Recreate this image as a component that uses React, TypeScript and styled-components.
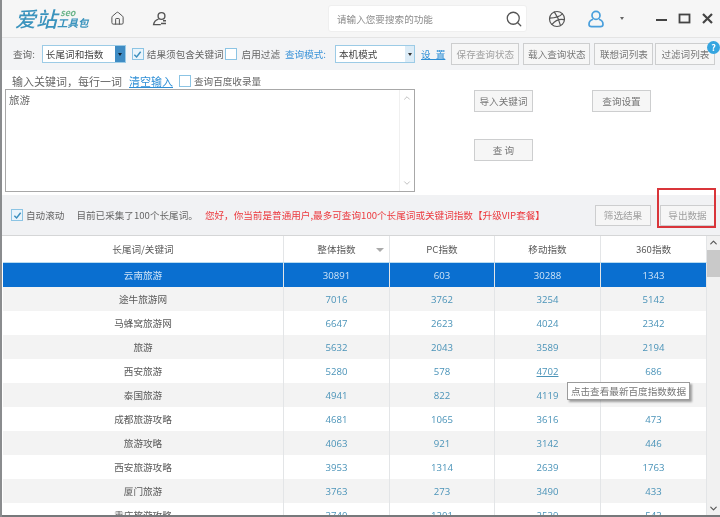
import React from "react";
import styled, { createGlobalStyle } from "styled-components";
import { ChevronDown, ChevronUp, Dribbble, House, Search } from "lucide-react";

const Global = createGlobalStyle`
  html, body { margin: 0; padding: 0; background: #f4f5f7; overflow: hidden; }
  * { box-sizing: border-box; }
`;

const FONT = `"Noto Sans CJK SC", "Liberation Sans", sans-serif`;

const Frame = styled.div`
  position: relative;
  width: 720px;
  height: 517px;
  overflow: hidden;
  display: flex;
  flex-direction: column;
  font-family: ${FONT};
  font-size: 9.6px;
  color: #666;
  background: #f4f5f7;
  border-left: 2px solid #8a8c8e;
  filter: blur(0.5px);
`;

const TitleBar = styled.div`
  height: 38px;
  display: flex;
  align-items: center;
  background: #f6f6f6;
  border-bottom: 1px solid #e4e4e4;
  padding-left: 13px;
  color: #555;
`;

const Logo = styled.div`
  width: 95px;
  display: flex;
  align-items: flex-end;
  color: #3a93bd;
  font-style: italic;
  line-height: 1;
`;

const LogoMain = styled.span`
  font-size: 21px;
  font-weight: 500;
`;

const LogoSide = styled.div`
  display: flex;
  flex-direction: column;
  align-items: flex-end;
  font-size: 10.5px;
  font-weight: 700;
  margin-bottom: 1px;
  span:first-child {
    font-size: 9px;
    color: #6bb58a;
    margin: 0 13px 1px 0;
    line-height: 8px;
  }
`;

const NavIcon = styled.div<{ $width: number }>`
  width: ${(p) => p.$width}px;
  display: flex;
  align-items: center;
`;

const SearchBox = styled.div`
  margin-left: 156px;
  width: 199px;
  height: 27px;
  background: #fff;
  border-radius: 3px;
  border: 1px solid #efefef;
  display: flex;
  align-items: center;
  justify-content: space-between;
  padding: 0 3px 0 8px;
  color: #8b8b8b;
`;

const TitleRight = styled.div`
  margin-left: 21px;
  display: flex;
  align-items: center;
`;

const Caret = styled.div`
  width: 0;
  height: 0;
  margin: 0 31px 0 15px;
  border-left: 2px solid transparent;
  border-right: 2px solid transparent;
  border-top: 3px solid #666;
`;

const WindowButtons = styled.div`
  display: flex;
  align-items: center;
  gap: 10px;
`;

const Toolbar = styled.div`
  height: 32px;
  display: flex;
  align-items: center;
  padding-left: 11px;
  background: #f3f4f6;
  white-space: nowrap;
`;

const Select = styled.div<{ $width: number }>`
  flex: none;
  width: ${(p) => p.$width}px;
  height: 18px;
  background: #fff;
  border: 1px solid #9ccbe6;
  display: flex;
  align-items: center;
  justify-content: space-between;
  padding-left: 3px;
  color: #444;
`;

const SelectArrow = styled.div<{ $dark?: boolean }>`
  width: ${(p) => (p.$dark ? 10 : 9)}px;
  height: 100%;
  background: ${(p) => (p.$dark ? "#3f8cc4" : "#dcecf7")};
  display: flex;
  align-items: center;
  justify-content: center;
  &::after {
    content: "";
    border-left: 2px solid transparent;
    border-right: 2px solid transparent;
    border-top: 3px solid ${(p) => (p.$dark ? "#123" : "#333")};
  }
`;

const Check = styled.span<{ $checked?: boolean }>`
  flex: none;
  width: 12px;
  height: 12px;
  border: 1px solid #8cc4e4;
  background: ${(p) => (p.$checked ? "#e9f4fb" : "#fff")};
  display: inline-flex;
  align-items: center;
  justify-content: center;
  svg { display: block; }
`;

const Spaced = styled.span<{ $left?: number; $color?: string }>`
  flex: none;
  margin-left: ${(p) => p.$left ?? 0}px;
  color: ${(p) => p.$color ?? "inherit"};
`;

const LinkText = styled.a<{ $left?: number }>`
  flex: none;
  margin-left: ${(p) => p.$left ?? 0}px;
  color: #2f8fd6;
  text-decoration: underline;
`;

const SettingLink = styled(LinkText)`
  word-spacing: 3px;
`;

const HeadLink = styled(LinkText)`
  font-size: 11px;
`;

const Button = styled.div<{ $width: number; $left?: number; $muted?: boolean; $height?: number }>`
  flex: none;
  width: ${(p) => p.$width}px;
  height: ${(p) => p.$height ?? 22}px;
  margin-left: ${(p) => p.$left ?? 0}px;
  border: 1px solid #cdcecf;
  background: #f6f6f6;
  color: ${(p) => (p.$muted ? "#a0a0a0" : "#777")};
  display: flex;
  align-items: center;
  justify-content: center;
  white-space: nowrap;
`;

const HelpBadge = styled.div`
  position: absolute;
  left: 705px;
  top: 41px;
  width: 13px;
  height: 13px;
  border-radius: 50%;
  background: #35a5e0;
  color: #fff;
  font-size: 9px;
  font-weight: 700;
  display: flex;
  align-items: center;
  justify-content: center;
`;

const InputPanel = styled.div`
  height: 125px;
  background: #fff;
  display: flex;
  padding-left: 3px;
`;

const InputColumn = styled.div`
  width: 410px;
  display: flex;
  flex-direction: column;
`;

const InputHead = styled.div`
  height: 19px;
  padding-top: 2px;
  display: flex;
  align-items: center;
  padding-left: 7px;
  white-space: nowrap;
`;

const HeadLabel = styled.span`
  font-size: 11px;
`;

const TextBox = styled.div`
  height: 103px;
  border: 1px solid #a8a8a8;
  display: flex;
  justify-content: space-between;
  padding: 2px 0 0 3px;
  color: #666;
  font-size: 10.5px;
`;

const TextScroll = styled.div`
  width: 15px;
  margin-top: -2px;
  display: flex;
  flex-direction: column;
  justify-content: space-between;
  align-items: center;
  padding: 3px 0;
  background: #fff;
  border-left: 1px solid #f0f0f0;
  color: #b5b5b5;
`;

const ActionGrid = styled.div`
  margin-left: 59px;
  padding-top: 20px;
  display: grid;
  grid-template-columns: 59px 59px;
  column-gap: 59px;
  row-gap: 27px;
  align-content: start;
`;

const StatusRow = styled.div`
  height: 41px;
  display: flex;
  align-items: center;
  padding: 0 5px 0 9px;
  background: #f1f2f4;
  border-bottom: 1px solid #d5d6d7;
  white-space: nowrap;
`;

const StatusActions = styled.div`
  margin-left: auto;
  display: flex;
`;

const RedMark = styled.div`
  position: absolute;
  left: 655px;
  top: 188px;
  width: 59px;
  height: 40px;
  border: 2px solid #d9353a;
`;

const TableArea = styled.div`
  flex: 1;
  min-height: 0;
  display: flex;
  padding-left: 1px;
  background: #fff;
`;

const Table = styled.div`
  width: 704px;
`;

const Row = styled.div<{ $tone: "head" | "active" | "odd" | "even" }>`
  height: ${(p) => (p.$tone === "head" ? 27 : 24)}px;
  display: grid;
  grid-template-columns: 281px 106px 105px 106px 106px;
  background: ${(p) =>
    p.$tone === "active" ? "#0a6fd0" : p.$tone === "even" ? "#f3f3f3" : "#fff"};
  color: ${(p) => (p.$tone === "active" ? "#cfe4f7" : p.$tone === "head" ? "#555" : "#4a93b8")};
  border-bottom: ${(p) => (p.$tone === "head" ? "1px solid #b9dcf0" : "0")};
`;

const Cell = styled.div<{ $word?: boolean }>`
  position: relative;
  display: flex;
  align-items: center;
  justify-content: center;
  border-right: 1px solid #e3e5e7;
  font-size: 9.6px;
  color: ${(p) => (p.$word ? "#5a5a5a" : "inherit")};
  font-family: ${(p) => (p.$word ? FONT : `"Open Sans", ${FONT}`)};
`;

const ActiveWord = styled(Cell)`
  color: #cfe4f7;
`;

const SortMark = styled.span`
  position: absolute;
  right: 5px;
  top: 12px;
  border-left: 4px solid transparent;
  border-right: 4px solid transparent;
  border-top: 4px solid #aaa;
`;

const Underlined = styled.span`
  text-decoration: underline;
`;

const Scrollbar = styled.div`
  width: 13px;
  display: flex;
  flex-direction: column;
  align-items: center;
  background: #f1f1f1;
  color: #555;
  padding-top: 1px;
`;

const ScrollThumb = styled.div`
  width: 13px;
  height: 27px;
  margin-top: 2px;
  background: #c9c9c9;
`;

const ScrollEnd = styled.div`
  margin-top: auto;
`;

const Tip = styled.div`
  position: absolute;
  left: 565px;
  top: 382px;
  width: 123px;
  height: 18px;
  background: #fff;
  border: 1px solid #9b9b9b;
  box-shadow: 2px 2px 2px rgba(0, 0, 0, 0.35);
  color: #777;
  display: flex;
  align-items: center;
  justify-content: center;
  white-space: nowrap;
`;

const BottomEdge = styled.div`
  position: absolute;
  left: 0;
  right: 0;
  bottom: 0;
  height: 2px;
  background: #77797b;
`;

const rows = [
  ["途牛旅游网", "7016", "3762", "3254", "5142"],
  ["马蜂窝旅游网", "6647", "2623", "4024", "2342"],
  ["旅游", "5632", "2043", "3589", "2194"],
  ["西安旅游", "5280", "578", "4702", "686"],
  ["泰国旅游", "4941", "822", "4119", ""],
  ["成都旅游攻略", "4681", "1065", "3616", "473"],
  ["旅游攻略", "4063", "921", "3142", "446"],
  ["西安旅游攻略", "3953", "1314", "2639", "1763"],
  ["厦门旅游", "3763", "273", "3490", "433"],
  ["重庆旅游攻略", "3740", "1201", "2539", "543"],
];

const Tick = () => (
  <svg width="9" height="9" viewBox="0 0 10 10" fill="none" stroke="#3c8fbe" strokeWidth="1.6">
    <path d="M1.5 5.2 4 7.8 8.5 2" />
  </svg>
);

export default function App() {
  return (
    <Frame>
      <Global />
      <TitleBar>
        <Logo>
          <LogoMain>爱站</LogoMain>
          <LogoSide>
            <span>seo</span>
            <span>工具包</span>
          </LogoSide>
        </Logo>
        <NavIcon $width={42}>
          <House size={15} strokeWidth={1.6} />
        </NavIcon>
        <NavIcon $width={20}>
          <svg width="16" height="16" viewBox="0 0 16 16" fill="none" stroke="#555" strokeWidth="1.4">
            <circle cx="9.5" cy="5" r="3.4" />
            <path d="M6.5 8.2C3.8 9 2 10.8 1.6 13.6h7.2" />
            <path d="M9 12.5h5M11 9.8h3" />
          </svg>
        </NavIcon>
        <SearchBox>
          请输入您要搜索的功能
          <Search size={18} strokeWidth={1.7} color="#555" />
        </SearchBox>
        <TitleRight>
          <Dribbble size={18} strokeWidth={1.6} color="#555" />
          <Spaced $left={21} />
          <svg width="18" height="18" viewBox="0 0 18 18" fill="none" stroke="#4a9fdc" strokeWidth="1.7">
            <circle cx="9" cy="5.4" r="4" />
            <path d="M6 9.2C3.4 10 2 12 2 14.2 2 15.8 3 16.6 4.6 16.6h8.8c1.6 0 2.6-.8 2.6-2.4 0-2.2-1.4-4.2-4-5" />
          </svg>
          <Caret />
          <WindowButtons>
            <svg width="13" height="13" viewBox="0 0 13 13"><path d="M1 8h11" stroke="#444" strokeWidth="2" /></svg>
            <svg width="13" height="13" viewBox="0 0 13 13" fill="none"><rect x="1.5" y="2.5" width="10" height="8" stroke="#444" strokeWidth="1.8" /></svg>
            <svg width="13" height="13" viewBox="0 0 13 13"><path d="M2 2l9 9M11 2l-9 9" stroke="#444" strokeWidth="2.2" /></svg>
          </WindowButtons>
        </TitleRight>
      </TitleBar>

      <Toolbar>
        <span>查询:</span>
        <Spaced $left={7} />
        <Select $width={84}>
          长尾词和指数
          <SelectArrow $dark />
        </Select>
        <Spaced $left={6} />
        <Check $checked><Tick /></Check>
        <Spaced $left={3}>结果须包含关键词</Spaced>
        <Spaced $left={1} />
        <Check />
        <Spaced $left={5}>启用过滤</Spaced>
        <Spaced $left={5} $color="#3b93d8">查询模式:</Spaced>
        <Spaced $left={9} />
        <Select $width={80}>
          本机模式
          <SelectArrow />
        </Select>
        <SettingLink $left={6}>设 置</SettingLink>
        <Button $width={68} $left={6} $muted>保存查询状态</Button>
        <Button $width={67} $left={4}>载入查询状态</Button>
        <Button $width={59} $left={4}>联想词列表</Button>
        <Button $width={60} $left={2}>过滤词列表</Button>
      </Toolbar>
      <HelpBadge>?</HelpBadge>

      <InputPanel>
        <InputColumn>
          <InputHead>
            <HeadLabel>输入关键词，每行一词</HeadLabel>
            <HeadLink $left={7}>清空输入</HeadLink>
            <Spaced $left={6} />
            <Check />
            <Spaced $left={3}>查询百度收录量</Spaced>
          </InputHead>
          <TextBox>
            旅游
            <TextScroll>
              <ChevronUp size={10} />
              <ChevronDown size={10} />
            </TextScroll>
          </TextBox>
        </InputColumn>
        <ActionGrid>
          <Button $width={59}>导入关键词</Button>
          <Button $width={59}>查询设置</Button>
          <Button $width={59}>查 询</Button>
        </ActionGrid>
      </InputPanel>

      <StatusRow>
        <Check $checked><Tick /></Check>
        <Spaced $left={3}>自动滚动</Spaced>
        <Spaced $left={12}>目前已采集了100个长尾词。</Spaced>
        <Spaced $left={7} $color="#ec3a3f">您好，你当前是普通用户,最多可查询100个长尾词或关键词指数【升级VIP套餐】</Spaced>
        <StatusActions>
          <Button $width={56} $height={21} $muted>筛选结果</Button>
          <Button $width={55} $left={9} $height={21} $muted>导出数据</Button>
        </StatusActions>
      </StatusRow>
      <RedMark />

      <TableArea>
        <Table>
          <Row $tone="head">
            <Cell $word>长尾词/关键词</Cell>
            <Cell $word>整体指数<SortMark /></Cell>
            <Cell $word>PC指数</Cell>
            <Cell $word>移动指数</Cell>
            <Cell $word>360指数</Cell>
          </Row>
          <Row $tone="active">
            <ActiveWord>云南旅游</ActiveWord>
            <Cell>30891</Cell>
            <Cell>603</Cell>
            <Cell>30288</Cell>
            <Cell>1343</Cell>
          </Row>
          {rows.map((r, i) => (
            <Row key={r[0]} $tone={i % 2 === 0 ? "even" : "odd"}>
              <Cell $word>{r[0]}</Cell>
              <Cell>{r[1]}</Cell>
              <Cell>{r[2]}</Cell>
              <Cell>{r[3] === "4702" ? <Underlined>{r[3]}</Underlined> : r[3]}</Cell>
              <Cell>{r[4]}</Cell>
            </Row>
          ))}
        </Table>
        <Scrollbar>
          <ChevronUp size={11} strokeWidth={2.5} />
          <ScrollThumb />
          <ScrollEnd>
            <ChevronDown size={11} strokeWidth={2.5} />
          </ScrollEnd>
        </Scrollbar>
      </TableArea>
      <Tip>点击查看最新百度指数数据</Tip>
      <BottomEdge />
    </Frame>
  );
}
